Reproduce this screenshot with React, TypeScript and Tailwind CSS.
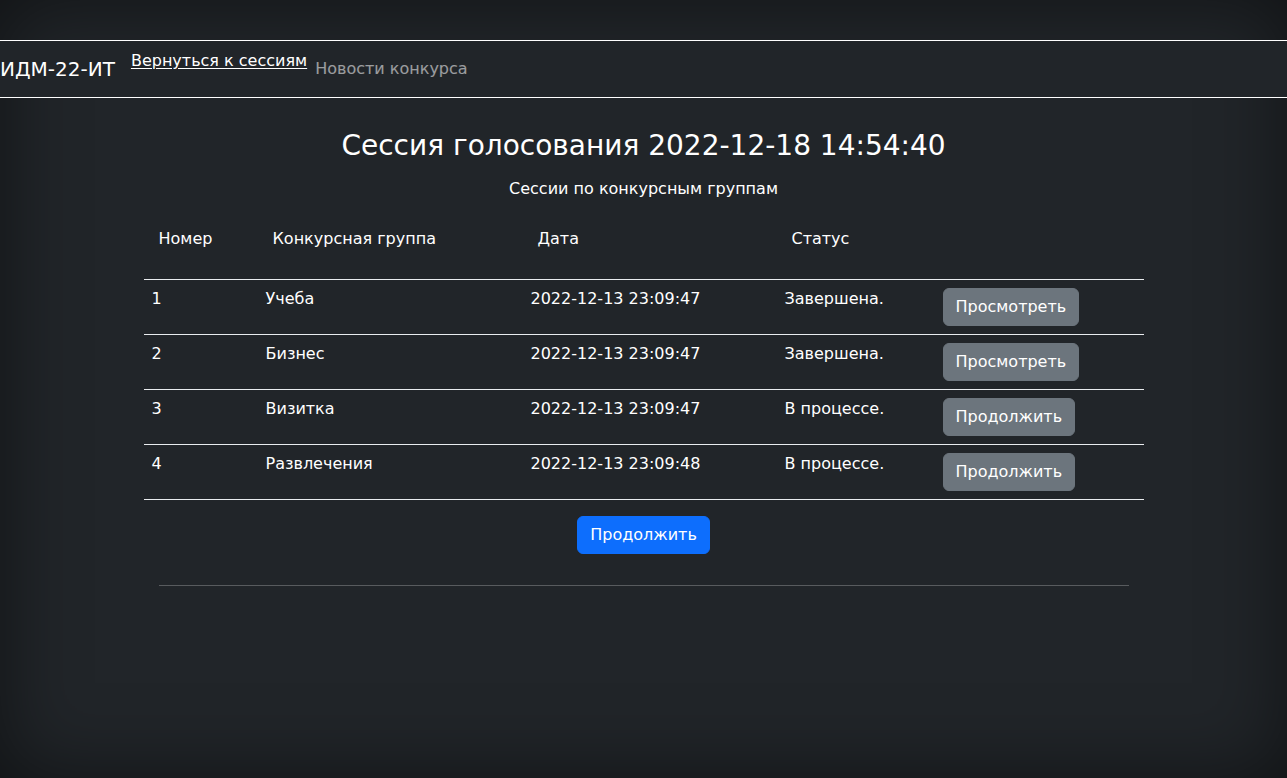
const rows = [
  { n: "1", group: "Учеба", date: "2022-12-13 23:09:47", status: "Завершена.", action: "Просмотреть" },
  { n: "2", group: "Бизнес", date: "2022-12-13 23:09:47", status: "Завершена.", action: "Просмотреть" },
  { n: "3", group: "Визитка", date: "2022-12-13 23:09:47", status: "В процессе.", action: "Продолжить" },
  { n: "4", group: "Развлечения", date: "2022-12-13 23:09:48", status: "В процессе.", action: "Продолжить" },
];

export default function App() {
  return (
    <div className="min-h-screen bg-[#212529] pt-10 text-white shadow-[inset_0_0_5rem_rgba(0,0,0,0.5)] font-['DejaVu_Sans',sans-serif]">
      <nav className="flex h-[58px] items-center border-y border-white bg-[#212529]">
        <span className="mr-4 text-[20px] leading-[30px]">ИДМ-22-ИТ</span>
        <a href="#" className="-mt-4 text-[16px] leading-6 underline underline-offset-2">
          Вернуться к сессиям
        </a>
        <a href="#" className="px-2 text-[16px] leading-6 text-white/55">
          Новости конкурса
        </a>
      </nav>

      <main className="mx-auto w-[1000px]">
        <h3 className="mt-[31px] text-center text-[28px] leading-[34px]">Сессия голосования 2022-12-18 14:54:40</h3>
        <p className="mt-[14px] text-center text-[16px] leading-6">Сессии по конкурсным группам</p>

        <table className="w-full table-fixed text-[16px] leading-6">
          <colgroup>
            <col className="w-[114px]" />
            <col className="w-[265px]" />
            <col className="w-[254px]" />
            <col className="w-[158px]" />
            <col className="w-[209px]" />
          </colgroup>
          <thead>
            <tr>
              <th className="pt-[26px] pb-[28px] pl-[15px] text-left font-normal">Номер</th>
              <th className="pt-[26px] pb-[28px] pl-[15px] text-left font-normal">Конкурсная группа</th>
              <th className="pt-[26px] pb-[28px] pl-[15px] text-left font-normal">Дата</th>
              <th className="pt-[26px] pb-[28px] pl-[15px] text-left font-normal">Статус</th>
              <th />
            </tr>
          </thead>
          <tbody>
            {rows.map((r) => (
              <tr key={r.n} className="border-y border-[#e9ecef]">
                <td className="px-2 pt-[7px] pb-2 align-top">{r.n}</td>
                <td className="px-2 pt-[7px] pb-2 align-top">{r.group}</td>
                <td className="px-2 pt-[7px] pb-2 align-top">{r.date}</td>
                <td className="px-2 pt-[7px] pb-2 align-top">{r.status}</td>
                <td className="p-2 align-top">
                  <button className="rounded-md border border-[#6c757d] bg-[#6c757d] px-3 py-1.5 text-white">
                    {r.action}
                  </button>
                </td>
              </tr>
            ))}
          </tbody>
        </table>

        <div className="mt-4 flex justify-center">
          <button className="rounded-md border border-[#0d6efd] bg-[#0d6efd] px-3 py-1.5 text-[16px] leading-6 text-white">
            Продолжить
          </button>
        </div>

        <hr className="mx-[15px] mt-[31px] border-t border-white/25" />
      </main>
    </div>
  );
}
